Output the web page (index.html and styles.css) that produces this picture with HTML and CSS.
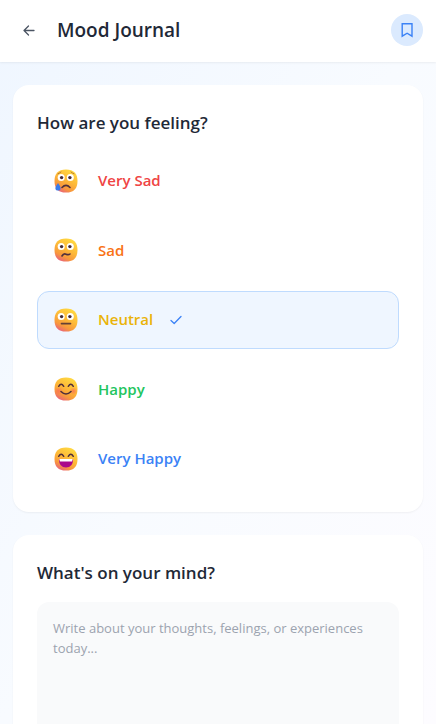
FILE: index.html
```html
<!DOCTYPE html>
<html lang="en">
<head>
<meta charset="utf-8">
<meta name="viewport" content="width=device-width, initial-scale=1">
<title>Mood Journal</title>
<link rel="stylesheet" href="styles.css">
</head>
<body>
<svg class="defs" aria-hidden="true">
  <defs>
    <linearGradient id="skin" x1="0.75" y1="0.05" x2="0.25" y2="1">
      <stop offset="0" stop-color="#ffd840"/>
      <stop offset="0.45" stop-color="#fdb838"/>
      <stop offset="0.75" stop-color="#f8983c"/>
      <stop offset="1" stop-color="#e85f80"/>
    </linearGradient>
    <radialGradient id="blush">
      <stop offset="0" stop-color="#f9665c" stop-opacity="0.75"/>
      <stop offset="1" stop-color="#f9665c" stop-opacity="0"/>
    </radialGradient>
    <path id="head" fill="url(#skin)" d="M12 .4C20 .4 23.500 4.500 23.500 12S20 23.600 12 23.600 .5 19.500 .5 12 4 .4 12 .4Z"/>
    <g id="eyes">
      <circle cx="7.200" cy="8.600" r="3.500" fill="#fff"/>
      <circle cx="16.300" cy="8.600" r="3.500" fill="#fff"/>
      <circle cx="7.600" cy="8.600" r="1.700" fill="#432a38"/>
      <circle cx="15.900" cy="8.600" r="1.700" fill="#432a38"/>
    </g>
    <g id="smiling-eyes" fill="none" stroke="#50303c" stroke-width="1.500" stroke-linecap="round">
      <path d="M4.700 9.300Q7.200 5.200 9.700 9.300"/>
      <path d="M14.300 9.300Q16.800 5.200 19.300 9.300"/>
    </g>
  </defs>
</svg>

<header class="topbar">
  <button class="back" type="button" aria-label="Back">
    <svg viewBox="0 0 16 16" width="16" height="16"><path d="M13 8.500H3m4.500-4.500L3 8.500 7.500 13"/></svg>
  </button>
  <h1>Mood Journal</h1>
  <button class="save" type="button" aria-label="Bookmark">
    <svg viewBox="0 0 16 16" width="16" height="16"><path d="M3.200 1.700h9.800v12.500l-4.900-3-4.900 3z"/></svg>
  </button>
</header>

<main>
  <section class="card">
    <h2 id="mood-title">How are you feeling?</h2>
    <div class="moods" role="group" aria-labelledby="mood-title">
      <button class="mood very-sad" type="button" aria-pressed="false">
        <svg class="face" viewBox="0 0 24 24">
          <use href="#head"/><use href="#eyes"/>
          <path d="M4 4.800Q5.700 4.100 7 3M20 4.800Q18.300 4.100 17 3" fill="none" stroke="#a8682d" stroke-width="0.800" stroke-linecap="round"/>
          <path d="M8 18.500Q12 14.200 16 18.500" fill="none" stroke="#50303c" stroke-width="1.600" stroke-linecap="round"/>
          <path d="M4 14Q1.400 17.500 1.400 19A2.600 2.600 0 0 0 6.600 19Q6.600 17.500 4 14Z" fill="#397bea"/>
        </svg>
        <span>Very Sad</span>
      </button>
      <button class="mood sad" type="button" aria-pressed="false">
        <svg class="face" viewBox="0 0 24 24">
          <use href="#head"/><use href="#eyes"/>
          <path d="M8 18Q9.500 15.200 12 16.200T16 16" fill="none" stroke="#50303c" stroke-width="1.600" stroke-linecap="round"/>
        </svg>
        <span>Sad</span>
      </button>
      <button class="mood neutral selected" type="button" aria-pressed="true">
        <svg class="face" viewBox="0 0 24 24">
          <use href="#head"/><use href="#eyes"/>
          <path d="M7.500 15.600H16.500" stroke="#654035" stroke-width="1.700" stroke-linecap="round"/>
        </svg>
        <span>Neutral</span>
        <svg class="check" viewBox="0 0 14 14"><path d="M2 7.500 5.200 10.500 12 3.500"/></svg>
      </button>
      <button class="mood happy" type="button" aria-pressed="false">
        <svg class="face" viewBox="0 0 24 24">
          <use href="#head"/>
          <circle cx="4.500" cy="14" r="4" fill="url(#blush)"/>
          <circle cx="19.500" cy="14" r="4" fill="url(#blush)"/>
          <use href="#smiling-eyes"/>
          <path d="M7 14.500Q12 19.500 17 14.500" fill="none" stroke="#50303c" stroke-width="1.600" stroke-linecap="round"/>
        </svg>
        <span>Happy</span>
      </button>
      <button class="mood very-happy" type="button" aria-pressed="false">
        <svg class="face" viewBox="0 0 24 24">
          <use href="#head"/><use href="#smiling-eyes"/>
          <path d="M5 12.200H19Q19 20.500 12 20.500T5 12.200Z" fill="#a9078c"/>
          <path d="M5.300 12H18.700L18 14.400H6Z" fill="#fff"/>
        </svg>
        <span>Very Happy</span>
      </button>
    </div>
  </section>

  <section class="card">
    <h2><label for="entry">What's on your mind?</label></h2>
    <textarea id="entry" rows="5" placeholder="Write about your thoughts, feelings, or experiences today..."></textarea>
  </section>
</main>
</body>
</html>
```
FILE: styles.css
```css
* {
  box-sizing: border-box;
}

body {
  display: flex;
  flex-direction: column;
  height: 100vh;
  margin: 0;
  background: linear-gradient(to bottom right, #eff6ff, #f8fbff 50%, #fdfcff);
  color: #1f2937;
  font-family: "Segoe UI", "Open Sans", "Noto Sans", sans-serif;
  font-size: 15px;
}

button,
textarea {
  border: 0;
  color: inherit;
  font: inherit;
}

button {
  padding: 0;
  background: none;
  cursor: pointer;
}

h1,
h2 {
  margin: 0;
  font-weight: 600;
}

svg {
  flex: none;
  fill: none;
  stroke-linecap: round;
  stroke-linejoin: round;
}

.defs {
  position: absolute;
  width: 0;
  height: 0;
}

.topbar {
  display: flex;
  flex: none;
  align-items: center;
  gap: 12px;
  padding: 14px 13px 16px;
  background: #fff;
  box-shadow: 0 1px 2px rgba(0, 0, 0, 0.06);
}

.topbar h1 {
  flex: 1;
  font-size: 19px;
  line-height: 32px;
}

.back,
.save {
  display: grid;
  place-items: center;
  width: 32px;
  height: 32px;
  border-radius: 50%;
}

.back {
  color: #4b5563;
}

.back svg {
  stroke: currentColor;
  stroke-width: 1.3;
}

.save {
  background: #dbeafe;
}

.save svg {
  stroke: #3b82f6;
  stroke-width: 1.4;
  stroke-linejoin: miter;
}

main {
  display: flex;
  flex: 1;
  flex-direction: column;
  gap: 23px;
  padding: 23px 13px;
  overflow-y: auto;
  scrollbar-width: none;
}

.card {
  flex: none;
  padding: 24px;
  border-radius: 16px;
  background: #fff;
  box-shadow: 0 1px 2px rgba(0, 0, 0, 0.05);
}

.card h2 {
  margin-bottom: 16px;
  font-size: 17px;
  line-height: 27px;
}

.moods {
  display: grid;
  gap: 12px;
}

.mood {
  display: flex;
  align-items: center;
  gap: 16px;
  padding: 15px 16px;
  border: 1px solid transparent;
  border-radius: 12px;
  font-weight: 600;
  line-height: 1.7;
  text-align: left;
}

.selected {
  border-color: #bfdbfe;
  background: #eff6ff;
}

.face {
  width: 24px;
  height: 24px;
  margin-right: 4px;
}

.check {
  width: 14px;
  height: 14px;
  stroke: #3b82f6;
  stroke-width: 1.3;
}

.very-sad { color: #ef4444; }
.sad { color: #f97316; }
.neutral { color: #eab308; }
.happy { color: #22c55e; }
.very-happy { color: #3b82f6; }

textarea {
  display: block;
  width: 100%;
  padding: 16px;
  border-radius: 12px;
  background: #f9fafb;
  font-size: 13px;
  line-height: 20px;
  resize: none;
}

textarea::placeholder {
  color: #9ca3af;
}
```
